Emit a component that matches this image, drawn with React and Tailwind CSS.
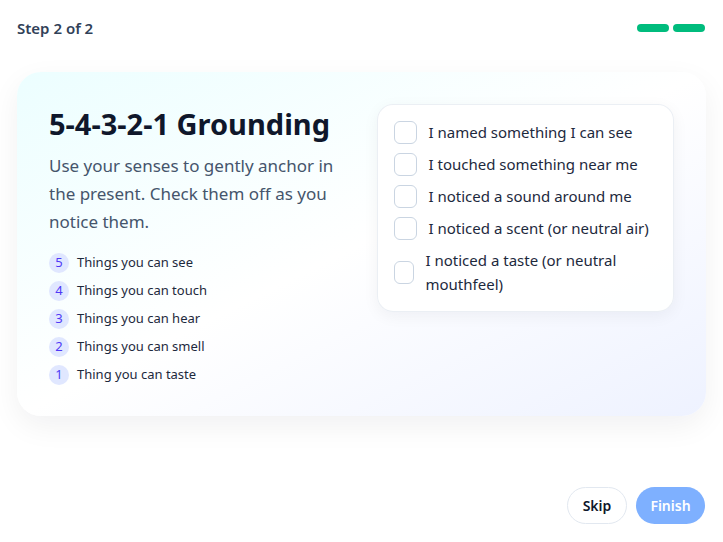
import React from "react";

const senses = [
  ["5", "Things you can see"],
  ["4", "Things you can touch"],
  ["3", "Things you can hear"],
  ["2", "Things you can smell"],
  ["1", "Thing you can taste"],
];

const checks = [
  "I named something I can see",
  "I touched something near me",
  "I noticed a sound around me",
  "I noticed a scent (or neutral air)",
];

export default function App() {
  return (
    <div
      className="min-h-[542px] w-full flex flex-col px-[17px] bg-white"
      style={{ fontFamily: '"Noto Sans", "Open Sans", sans-serif' }}
    >
      <header className="h-[56px] flex items-center justify-between">
        <span className="text-[15px] font-semibold text-slate-700">Step 2 of 2</span>
        <div className="flex gap-1 pr-px">
          <span className="block w-8 h-2 rounded-full bg-emerald-500" />
          <span className="block w-8 h-2 rounded-full bg-emerald-500" />
        </div>
      </header>

      <section className="mt-4 rounded-3xl bg-gradient-to-br from-cyan-50 via-white to-indigo-50 px-8 pt-8 pb-[31px] shadow-[0_10px_30px_rgba(15,23,42,0.06)] grid grid-cols-2 gap-8">
        <div>
          <h1 className="mt-[2px] text-[29px] leading-[36px] font-bold text-slate-900">
            5-4-3-2-1 Grounding
          </h1>
          <p className="mt-[10px] text-[17px] leading-[28px] text-slate-600">
            Use your senses to gently anchor in the present. Check them off as you notice them.
          </p>
          <ul className="mt-[17px] flex flex-col gap-2">
            {senses.map(([n, t]) => (
              <li key={n} className="flex items-center gap-2 h-5">
                <span className="w-5 h-5 rounded-full bg-indigo-100 text-indigo-600 text-[13px] flex items-center justify-center">
                  {n}
                </span>
                <span className="text-[13px] text-slate-800">{t}</span>
              </li>
            ))}
          </ul>
        </div>

        <div className="self-start -ml-px rounded-2xl bg-white/90 border border-slate-200/70 shadow-[0_4px_16px_rgba(15,23,42,0.05)] px-4 py-[15px] flex flex-col gap-2">
          {checks.map((c) => (
            <label key={c} className="flex items-center gap-3 h-6">
              <span className="w-[23px] h-[23px] shrink-0 rounded-md border border-slate-300 bg-white" />
              <span className="text-[15px] leading-6 text-slate-800">{c}</span>
            </label>
          ))}
          <label className="flex items-center gap-3">
            <span className="w-[20px] h-[23px] shrink-0 rounded-md border border-slate-300 bg-white" />
            <span className="text-[15px] leading-6 text-slate-800">
              I noticed a taste (or neutral mouthfeel)
            </span>
          </label>
        </div>
      </section>

      <div className="flex-1" />

      <footer className="flex justify-end gap-[9px] pb-[18px] pr-px">
        <button className="h-[37px] w-[60px] rounded-full border border-slate-200 bg-white text-[14px] font-semibold text-slate-900">
          Skip
        </button>
        <button className="h-[37px] w-[69px] rounded-full bg-[#7eb0ff] text-[14px] font-semibold text-white">
          Finish
        </button>
      </footer>
    </div>
  );
}
